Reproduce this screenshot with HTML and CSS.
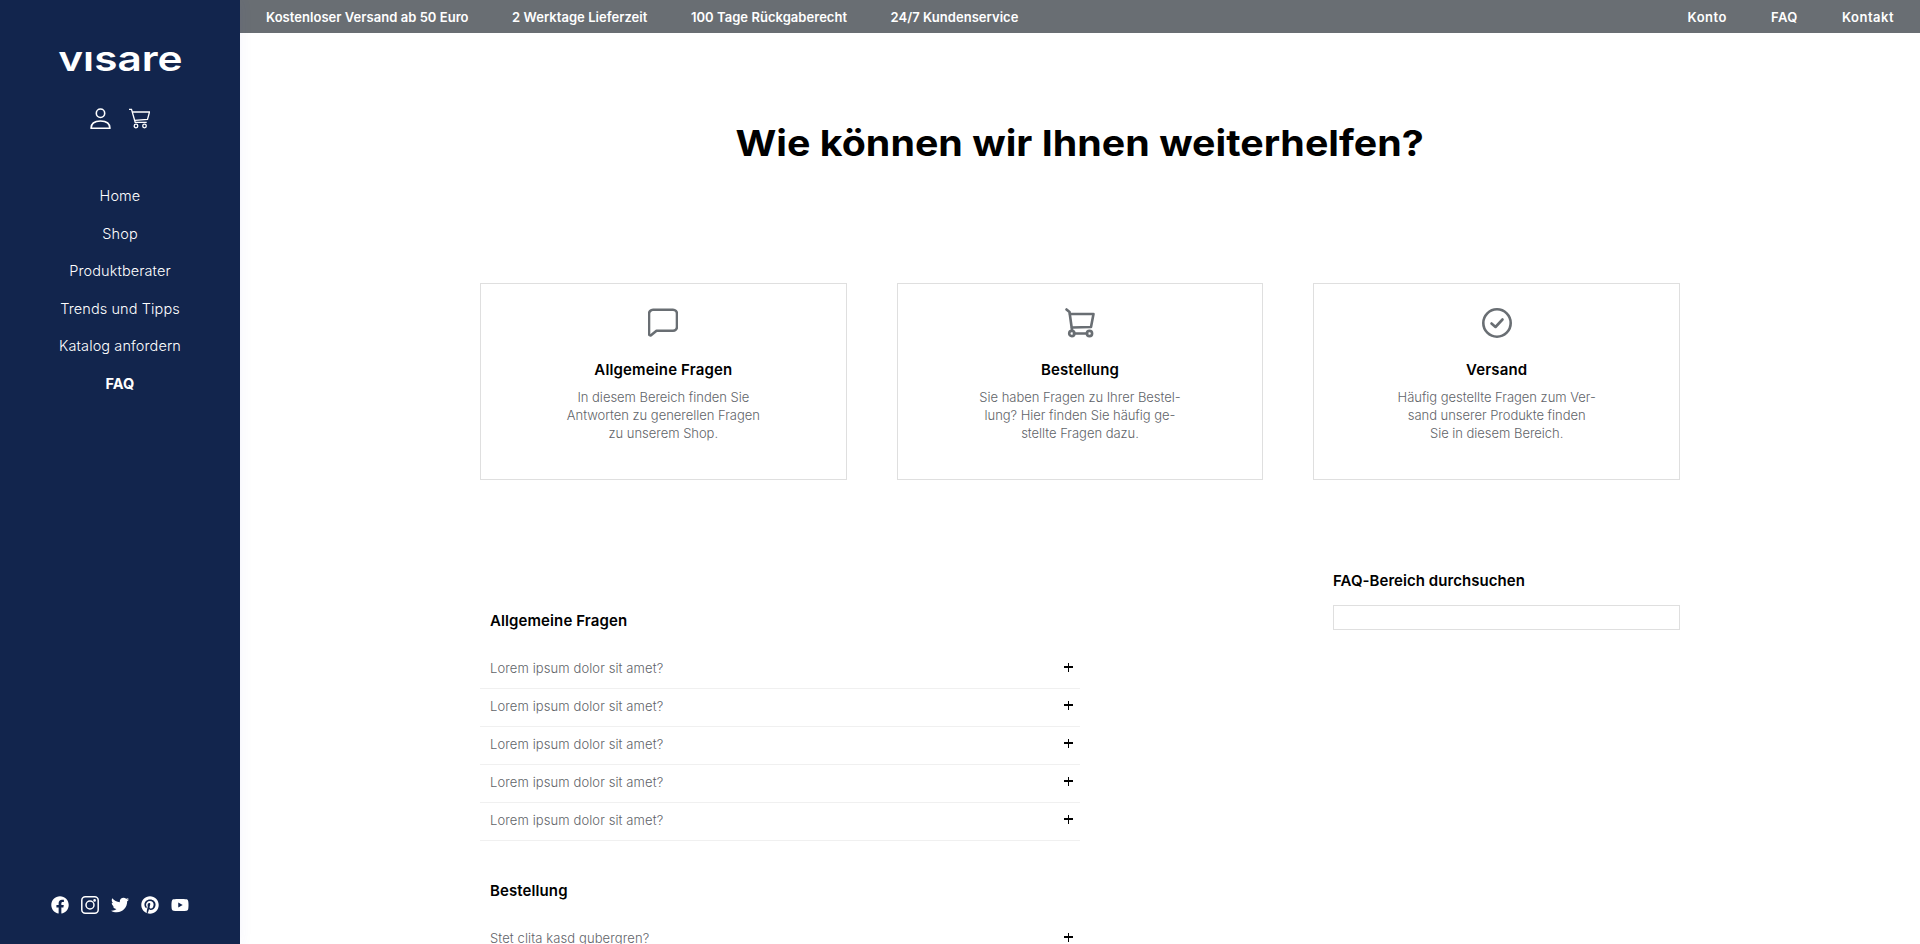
FILE: index.html
```html
<!DOCTYPE html>
<html lang="de">
<head>
<meta charset="utf-8">
<title>FAQ – visare</title>
<link rel="stylesheet" href="styles.css">
</head>
<body>
<div class="app">
  <aside class="sidebar">
    <div class="logo" aria-label="visare"><span class="logo-text">vısare</span></div>
    <div class="account">
      <svg class="acc-icon" viewBox="0 0 20 20" fill="none" stroke="#fff" stroke-width="1.5"><circle cx="10" cy="5" r="4"/><path d="M1 19.300c0-4.600 3.500-7 9-7s9 2.400 9 7z" stroke-linejoin="round"/></svg>
      <svg class="acc-icon" viewBox="0 0 21 20" fill="none" stroke="#fff" stroke-width="1.3"><path d="M0 .8h2.500l3.700 13h11.500"/><path d="M3.200 3.500H20.500l-2 7.500-12.800.8"/><circle cx="7" cy="17.500" r="1.800"/><circle cx="15.500" cy="17.500" r="1.800"/></svg>
    </div>
    <nav class="side-nav">
      <a>Home</a>
      <a>Shop</a>
      <a>Produktberater</a>
      <a>Trends und Tipps</a>
      <a>Katalog anfordern</a>
      <a class="active">FAQ</a>
    </nav>
    <div class="social">
      <svg class="soc" viewBox="0 0 512 512"><path d="M504 256C504 119 393 8 256 8S8 119 8 256c0 123.780 90.690 226.380 209.250 245V327.690h-63V256h63v-54.640c0-62.150 37-96.480 93.670-96.480 27.140 0 55.520 4.840 55.520 4.840v61h-31.280c-30.800 0-40.410 19.120-40.410 38.730V256h68.780l-11 71.690h-57.780V501C413.310 482.380 504 379.780 504 256z"/></svg>
      <svg class="soc soc-line" viewBox="0 0 18 18"><rect x=".8" y=".8" width="16.400" height="16.400" rx="3.500"/><circle cx="9" cy="9" r="4"/><circle class="soc-dot" cx="13.600" cy="4.400" r=".6"/></svg>
      <svg class="soc" viewBox="0 0 512 512"><path d="M459.370 151.716c.325 4.548.325 9.097.325 13.645 0 138.720-105.583 298.558-298.558 298.558-59.452 0-114.680-17.219-161.137-47.106 8.447.974 16.568 1.299 25.340 1.299 49.055 0 94.213-16.568 130.274-44.832-46.132-.975-84.792-31.188-98.112-72.772 6.498.974 12.995 1.624 19.818 1.624 9.421 0 18.843-1.300 27.614-3.573-48.081-9.747-84.143-51.980-84.143-102.985v-1.299c13.969 7.797 30.214 12.670 47.431 13.319-28.264-18.843-46.781-51.005-46.781-87.391 0-19.492 5.197-37.360 14.294-52.954 51.655 63.675 129.300 105.258 216.365 109.807-1.624-7.797-2.599-15.918-2.599-24.040 0-57.828 46.782-104.934 104.934-104.934 30.213 0 57.502 12.670 76.670 33.137 23.715-4.548 46.456-13.320 66.599-25.340-7.798 24.366-24.366 44.833-46.132 57.827 21.117-2.273 41.584-8.122 60.426-16.243-14.292 20.791-32.161 39.308-52.628 54.253z"/></svg>
      <svg class="soc" viewBox="0 0 496 512"><path d="M496 256c0 137-111 248-248 248-25.600 0-50.200-3.900-73.400-11.100 10.100-16.500 25.200-43.500 30.800-65 3-11.600 15.400-59 15.400-59 8.100 15.400 31.700 28.500 56.800 28.500 74.800 0 128.700-68.800 128.700-154.300 0-81.900-66.900-143.200-152.900-143.200-107 0-163.900 71.800-163.900 150.100 0 36.400 19.400 81.700 50.300 96.100 4.700 2.200 7.200 1.200 8.300-3.300.8-3.400 5-20.300 6.900-28.100.6-2.500.3-4.700-1.700-7.100-10.100-12.500-18.300-35.300-18.300-56.600 0-54.700 41.400-107.600 112-107.600 60.900 0 103.600 41.500 103.600 100.900 0 67.100-33.900 113.600-78 113.600-24.300 0-42.600-20.100-36.700-44.800 7-29.500 20.500-61.300 20.500-82.600 0-19-10.200-34.900-31.400-34.900-24.900 0-44.900 25.700-44.900 60.200 0 22 7.400 36.800 7.400 36.800s-24.500 103.800-29 123.200c-5 21.400-3 51.600-.9 71.200C65.400 450.900 0 361.100 0 256 0 119 111 8 248 8s248 111 248 248z"/></svg>
      <svg class="soc" viewBox="0 0 576 512"><path d="M549.655 124.083c-6.281-23.650-24.787-42.276-48.284-48.597C458.781 64 288 64 288 64S117.220 64 74.629 75.486c-23.497 6.322-42.003 24.947-48.284 48.597-11.412 42.867-11.412 132.305-11.412 132.305s0 89.438 11.412 132.305c6.281 23.650 24.787 41.500 48.284 47.821C117.220 448 288 448 288 448s170.780 0 213.371-11.486c23.497-6.321 42.003-24.171 48.284-47.821 11.412-42.867 11.412-132.305 11.412-132.305s0-89.438-11.412-132.305zm-317.510 213.508V175.185l142.739 81.205-142.739 81.201z"/></svg>
    </div>
  </aside>
  <div class="content">
    <header class="topbar">
      <div class="top-group usp">
        <span>Kostenloser Versand ab 50 Euro</span>
        <span>2 Werktage Lieferzeit</span>
        <span>100 Tage Rückgaberecht</span>
        <span>24/7 Kundenservice</span>
      </div>
      <div class="top-group links">
        <a>Konto</a>
        <a>FAQ</a>
        <a>Kontakt</a>
      </div>
    </header>
    <main class="main">
      <h1 class="title"><span class="title-text">Wie können wir Ihnen weiterhelfen?</span></h1>
      <section class="cards">
        <article class="card">
          <svg class="card-icon" viewBox="0 0 30 30" fill="none" stroke="#696e73" stroke-width="2.600" stroke-linejoin="round"><path d="M5 1.800h20a4 4 0 0 1 4 4v13a4 4 0 0 1-4 4H8.500l-5.500 4.500a1.500 1.500 0 0 1-2-1.200V5.800a4 4 0 0 1 4-4z"/></svg>
          <h2>Allgemeine Fragen</h2>
          <p>In diesem Bereich finden Sie<br>Antworten zu generellen Fragen<br>zu unserem Shop.</p>
        </article>
        <article class="card">
          <svg class="card-icon" viewBox="0 0 30 30" fill="none" stroke="#696e73" stroke-width="2.600" stroke-linejoin="round" stroke-linecap="round"><path d="M1.500 1.500l3 2.500 2.500 18"/><path d="M5 6h23.500l-2.500 13-19 .5"/><path d="M9 25.500h13"/><circle cx="6.800" cy="25.500" r="2.600"/><circle cx="24.500" cy="25.500" r="2.600"/></svg>
          <h2>Bestellung</h2>
          <p>Sie haben Fragen zu Ihrer Bestel-<br>lung? Hier finden Sie häufig ge-<br>stellte Fragen dazu.</p>
        </article>
        <article class="card">
          <svg class="card-icon" viewBox="0 0 30 30" fill="none" stroke="#696e73" stroke-width="2.600" stroke-linecap="round" stroke-linejoin="round"><circle cx="15" cy="15" r="13.700"/><path d="M9.500 15.500l4 3.500 7-7.500"/></svg>
          <h2>Versand</h2>
          <p>Häufig gestellte Fragen zum Ver-<br>sand unserer Produkte finden<br>Sie in diesem Bereich.</p>
        </article>
      </section>
      <section class="faq">
        <div class="faq-list">
          <h3 class="faq-heading">Allgemeine Fragen</h3>
          <ul class="rows">
            <li class="row"><span>Lorem ipsum dolor sit amet?</span><i class="plus"></i></li>
            <li class="row"><span>Lorem ipsum dolor sit amet?</span><i class="plus"></i></li>
            <li class="row"><span>Lorem ipsum dolor sit amet?</span><i class="plus"></i></li>
            <li class="row"><span>Lorem ipsum dolor sit amet?</span><i class="plus"></i></li>
            <li class="row"><span>Lorem ipsum dolor sit amet?</span><i class="plus"></i></li>
          </ul>
          <h3 class="faq-heading second">Bestellung</h3>
          <ul class="rows">
            <li class="row"><span>Stet clita kasd gubergren?</span><i class="plus"></i></li>
            <li class="row"><span>Stet clita kasd gubergren?</span><i class="plus"></i></li>
          </ul>
        </div>
        <div class="search">
          <label class="search-label" for="faq-search">FAQ-Bereich durchsuchen</label>
          <input class="search-input" id="faq-search" type="text">
        </div>
      </section>
    </main>
  </div>
</div>
</body>
</html>
```
FILE: styles.css
```css
* { box-sizing: border-box; }
html, body { margin: 0; height: 100%; overflow: hidden; }
body { font-family: Inter, "Noto Sans", sans-serif; color: #000; background: #fff; }
.app { display: flex; height: 100vh; }

.sidebar {
  flex: 0 0 240px;
  display: flex;
  flex-direction: column;
  align-items: center;
  background: #12254d;
  color: #fff;
  box-shadow: 0 0 14px rgba(60, 60, 200, .06);
  position: relative;
  z-index: 2;
}
.logo { margin-top: 38px; height: 40px; display: flex; align-items: center; justify-content: center; }
.logo-text { display: inline-block; font-size: 35px; line-height: 40px; font-weight: 600; transform: scaleX(1.21); }
.account { display: flex; gap: 18px; margin-top: 30px; }
.acc-icon { width: 21px; height: 21px; display: block; }
.side-nav { display: flex; flex-direction: column; align-items: center; margin-top: 48px; }
.side-nav a { font-size: 14.5px; line-height: 37.5px; font-weight: 350; letter-spacing: .1px; white-space: nowrap; }
.side-nav a.active { font-weight: 700; }
.social { margin-top: auto; margin-bottom: 30px; display: flex; gap: 12px; align-items: center; }
.soc { width: 18px; height: 18px; display: block; fill: #fff; }
.soc-line { fill: none; stroke: #fff; stroke-width: 1.5; }
.soc-dot { fill: #fff; }

.content { flex: 1; display: flex; flex-direction: column; min-width: 0; }
.topbar {
  flex: 0 0 33px;
  display: flex;
  justify-content: space-between;
  align-items: center;
  padding: 0 26px;
  background: #696e73;
  color: #fff;
  font-size: 13px;
  font-weight: 600;
  white-space: nowrap;
}
.top-group { display: flex; }
.usp { gap: 43.5px; letter-spacing: .04px; }
.links { gap: 44px; letter-spacing: .5px; }

.main { width: 1200px; margin: 0 auto; flex: 1; overflow: hidden; }
.title { margin: 88px 0 0; text-align: center; font-size: 36px; line-height: 44px; font-weight: 700; white-space: nowrap; }
.title-text { display: inline-block; transform: scaleX(1.094); }
.cards { display: grid; grid-template-columns: repeat(3, 1fr); gap: 50px; margin-top: 118px; }
.card {
  height: 197px;
  border: 1px solid #dfdfdf;
  display: flex;
  flex-direction: column;
  align-items: center;
  padding-top: 24px;
  text-align: center;
}
.card-icon { width: 30px; height: 30px; display: block; }
.card h2 { margin: 22px 0 0; font-size: 15px; line-height: 20px; font-weight: 600; letter-spacing: .15px; }
.card p { margin: 8px 0 0; font-size: 13px; line-height: 18px; font-weight: 350; letter-spacing: -.03px; color: #5f6469; white-space: nowrap; }

.faq { display: flex; justify-content: space-between; align-items: flex-start; }
.faq-list { width: 600px; padding-top: 131px; }
.faq-heading { margin: 0; padding-left: 10px; font-size: 15px; line-height: 20px; font-weight: 600; letter-spacing: .1px; }
.faq-heading.second { margin-top: 40px; }
.rows { list-style: none; margin: 20px 0 0; padding: 0; }
.row {
  height: 38px;
  display: flex;
  justify-content: space-between;
  align-items: center;
  padding: 0 6px 3px 10px;
  border-bottom: 1px solid #f0f0f0;
  font-size: 13px;
  font-weight: 300;
  letter-spacing: .1px;
  color: #5f6469;
}
.plus { position: relative; display: block; width: 9px; height: 9px; margin: 0 1px 2px 0; }
.plus::before, .plus::after { content: ""; position: absolute; background: #000; }
.plus::before { left: 0; right: 0; top: 3.5px; height: 1.5px; }
.plus::after { top: 0; bottom: 0; left: 3.5px; width: 1.5px; }

.search { width: 347px; padding-top: 91px; }
.search-label { display: block; font-size: 15px; line-height: 20px; font-weight: 600; letter-spacing: .05px; }
.search-input { display: block; width: 100%; height: 25px; margin-top: 14px; border: 1px solid #dfdfdf; background: #fff; padding: 0 6px; outline: none; }
```
